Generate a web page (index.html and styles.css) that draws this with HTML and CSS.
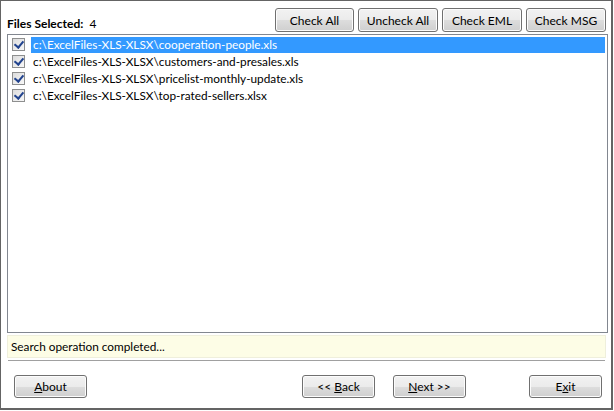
FILE: index.html
```html
<!DOCTYPE html>
<html>
<head>
<meta charset="utf-8">
<link rel="stylesheet" href="styles.css">
</head>
<body>
<div class="window">
  <div class="toolbar">
    <div class="count"><b>Files Selected:</b>&nbsp; 4</div>
    <div class="tools">
      <button class="btn">Check All</button>
      <button class="btn">Uncheck All</button>
      <button class="btn">Check EML</button>
      <button class="btn">Check MSG</button>
    </div>
  </div>
  <div class="list">
    <div class="row"><span class="cb"></span><span class="name sel">c:\ExcelFiles-XLS-XLSX\cooperation-people.xls</span></div>
    <div class="row"><span class="cb"></span><span class="name">c:\ExcelFiles-XLS-XLSX\customers-and-presales.xls</span></div>
    <div class="row"><span class="cb"></span><span class="name">c:\ExcelFiles-XLS-XLSX\pricelist-monthly-update.xls</span></div>
    <div class="row"><span class="cb"></span><span class="name">c:\ExcelFiles-XLS-XLSX\top-rated-sellers.xlsx</span></div>
  </div>
  <div class="status">Search operation completed...</div>
  <div class="sep"></div>
  <div class="footer">
    <button class="btn big"><u>A</u>bout</button>
    <div class="nav">
      <button class="btn big">&lt;&lt; <u>B</u>ack</button>
      <button class="btn big"><u>N</u>ext &gt;&gt;</button>
    </div>
    <button class="btn big">E<u>x</u>it</button>
  </div>
</div>
</body>
</html>
```
FILE: styles.css
```css
* { box-sizing: border-box; }
html, body { margin: 0; padding: 0; background: #fff; }
body { font-family: "Lato", "Open Sans", sans-serif; font-size: 11.8px; color: #000; }
.window {
  width: 613px; height: 410px;
  border: 1px solid #646464; border-width: 1px 2px 2px 1px;
  padding: 0 3px 0 6px;
  display: flex; flex-direction: column;
}
.toolbar { display: flex; align-items: flex-end; height: 33px; padding-bottom: 2px; }
.count { flex: 1; padding-bottom: 1px; font-size: 12px; }
.count b { font-weight: 700; }
.tools { display: flex; gap: 4px; padding-right: 2px; }
.btn {
  font-family: inherit; font-size: 12px; color: #000;
  height: 24px; width: 80px; padding: 0;
  border: 1px solid #707070; border-radius: 3px;
  background: linear-gradient(#f2f2f2 0%, #ebebeb 50%, #dddddd 51%, #cfcfcf 100%);
  box-shadow: inset 0 0 0 1px #fcfcfc;
}
.tools .btn:first-child { width: 79px; }
.list {
  height: 299px; border: 1px solid #828790;
  padding: 1px 2px 0 3px;
}
.row { display: flex; align-items: center; height: 17px; }
.cb {
  width: 13px; height: 13px; margin: 0 6px 0 1px;
  border: 1px solid #8e8f8f; background: linear-gradient(135deg, #dcdcdc, #f8f8f8);
  position: relative;
}
.cb::after {
  content: ""; position: absolute; left: 3px; top: 0px; width: 4px; height: 7px;
  border: solid #21438e; border-width: 0 2px 2px 0; transform: rotate(40deg);
}
.name { padding: 0 2px; line-height: 16px; }
.name.sel { background: #3399ff; color: #fff; flex: 1; }
.status {
  margin-top: 2px; height: 23px; background: #fdfde6; border: 1px solid #efefdc;
  padding: 3px 3px; margin-right: 2px;
}
.sep { height: 1px; background: #a0a0a0; margin: 2px 3px 0 1px; }
.footer { display: flex; align-items: center; padding: 14px 6px 0 7px; }
.big { width: 73px; height: 23px; }
.nav { flex: 1; display: flex; justify-content: flex-end; gap: 18px; padding-right: 63px; }
```
